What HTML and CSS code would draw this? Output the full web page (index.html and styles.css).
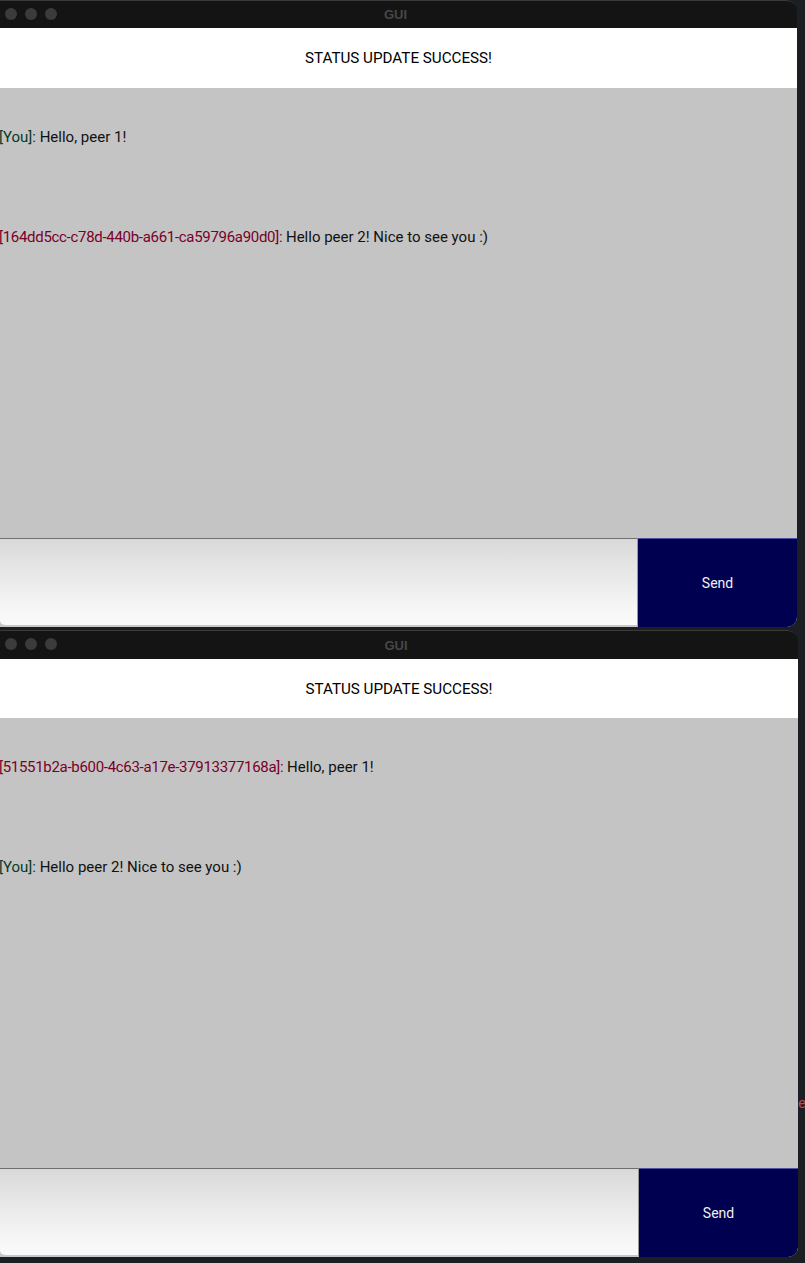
FILE: index.html
```html
<!DOCTYPE html>
<html>
<head>
<meta charset="utf-8">
<link rel="stylesheet" href="styles.css">
</head>
<body>
<div class="desk">
  <div class="win win1">
    <div class="titlebar">
      <div class="lights"><span class="dot"></span><span class="dot"></span><span class="dot"></span></div>
      <div class="title">GUI</div>
    </div>
    <div class="status">STATUS UPDATE SUCCESS!</div>
    <div class="chat">
      <div class="msg"><span class="me">[You]:</span> Hello, peer 1!</div>
      <div class="msg"><span class="peer">[164dd5cc-c78d-440b-a661-ca59796a90d0]:</span> Hello peer 2! Nice to see you :)</div>
    </div>
    <div class="inputrow">
      <div class="field"></div>
      <div class="send">Send</div>
    </div>
  </div>
  <div class="win win2">
    <div class="titlebar">
      <div class="lights"><span class="dot"></span><span class="dot"></span><span class="dot"></span></div>
      <div class="title">GUI</div>
    </div>
    <div class="status">STATUS UPDATE SUCCESS!</div>
    <div class="chat">
      <div class="msg"><span class="peer">[51551b2a-b600-4c63-a17e-37913377168a]:</span> Hello, peer 1!</div>
      <div class="msg"><span class="me">[You]:</span> Hello peer 2! Nice to see you :)</div>
    </div>
    <div class="inputrow">
      <div class="field"></div>
      <div class="send">Send</div>
    </div>
  </div>
  <span class="stray">e</span>
</div>
</body>
</html>
```
FILE: styles.css
```css
html, body {
  margin: 0;
  padding: 0;
  background: #1b1e23;
  font-family: Roboto, "Liberation Sans", sans-serif;
  overflow: hidden;
}
.desk {
  position: relative;
  width: 805px;
  height: 1263px;
  display: flex;
  flex-direction: column;
  gap: 3px;
}
.win {
  display: flex;
  flex-direction: column;
  border-radius: 0 10px 10px 0;
  overflow: hidden;
  background: #141414;
}
.win1 { width: 797px; }
.win2 { width: 798px; }
.titlebar {
  height: 28px;
  position: relative;
  background: #141414;
  border-top: 1px solid #3a3a3a;
  box-sizing: border-box;
  border-radius: 0 10px 0 0;
  display: flex;
  align-items: center;
  justify-content: center;
}
.win2 .titlebar { height: 29px; }
.lights {
  position: absolute;
  left: 5px;
  top: 7px;
  display: flex;
  gap: 8px;
}
.dot {
  width: 12px;
  height: 12px;
  border-radius: 50%;
  background: #3b3b3b;
}
.title {
  color: #474747;
  font-weight: bold;
  font-size: 13px;
  margin-left: -6px;
  font-family: "Liberation Sans", Arial, sans-serif;
}
.status {
  height: 60px;
  background: #ffffff;
  display: flex;
  align-items: center;
  justify-content: center;
  font-size: 15.2px;
  color: #000;
}
.win1 .status { height: 60px; }
.win2 .status { height: 59px; }
.chat {
  height: 450px;
  background: #c4c4c4;
  box-sizing: border-box;
  padding-top: 40px;
  display: flex;
  flex-direction: column;
  gap: 82px;
}
.msg {
  height: 18px;
  line-height: 18px;
  font-size: 15px;
  color: #111;
  margin-left: -1px;
  white-space: nowrap;
}
.me { color: #053a25; }
.peer { color: #7a0028; letter-spacing: -0.3px; }
.inputrow {
  height: 89px;
  display: flex;
  background: #c4c4c4;
}
.field {
  flex: 1;
  border-top: 1px solid #6f6f6f;
  border-right: 1px solid #999;
  border-bottom: 2px solid #c8c8c8;
  border-radius: 0 0 0 6px;
  background: linear-gradient(#d9d9d9, #f6f6f6 80%, #fafafa);
}
.send {
  width: 159px;
  background: #000050;
  border-top: 1px solid #5050a0;
  color: #f0f0f0;
  font-size: 14px;
  display: flex;
  align-items: center;
  justify-content: center;
  border-radius: 0 0 9px 0;
}
.stray {
  position: absolute;
  left: 798px;
  top: 1094px;
  color: #c04458;
  font-size: 15px;
}
```
